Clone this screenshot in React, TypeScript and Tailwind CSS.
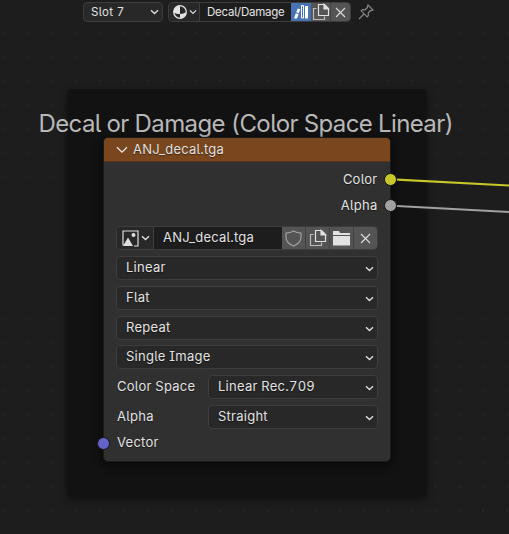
import React from 'react';

function Chevron({ className = '' }: { className?: string }) {
  return (
    <svg className={`shrink-0 ${className}`} width="9" height="6" viewBox="0 0 9 6" fill="none" stroke="#dedede" strokeWidth="1.4">
      <path d="M1 1.2 4.5 4.5 8 1.2" />
    </svg>
  );
}

function Duplicate() {
  return (
    <svg width="18" height="18" viewBox="0 0 18 18" fill="none" stroke="#e0e0e0" strokeWidth="1.2">
      <path d="M4.500 5.500h-3v11h11v-3" stroke="#bdbdbd" />
      <path d="M6.500 1.500h6l4 4v7h-10z" />
      <path d="M12 1.500v4.500h4.500z" fill="#e0e0e0" />
    </svg>
  );
}

function Cross() {
  return (
    <svg width="11" height="11" viewBox="0 0 11 11" fill="none" stroke="#d9d9d9" strokeWidth="1.2">
      <path d="m1 1 9 9M10 1 1 10" />
    </svg>
  );
}

function Select({ label, className = '' }: { label: string; className?: string }) {
  return (
    <div className={`flex h-6 items-center justify-between rounded-[4px] border border-[#3d3d3d] bg-[#282828] pl-[9px] pr-[3px] ${className}`}>
      <span>{label}</span>
      <Chevron className="mt-px" />
    </div>
  );
}

function Toolbar() {
  return (
    <div className="flex h-6 pl-[83px] pt-[2px] text-[11.5px]">
      <div className="flex h-5 w-20 items-center justify-between rounded-[4px] border border-[#3d3d3d] bg-[#282828] pl-[7px] pr-[3px]">
        <span className="pt-px tracking-[0.35px]">Slot 7</span>
        <Chevron />
      </div>
      <div className="ml-[5px] flex h-5 w-[183px] overflow-hidden rounded-[4px] border border-[#3d3d3d] bg-[#1d1d1d]">
        <div className="flex w-[31px] shrink-0 items-center justify-between border-r border-[#3d3d3d] bg-[#282828] pl-[4px] pr-[2px]">
          <svg width="14" height="14" viewBox="0 0 14 14">
            <circle cx="7" cy="7" r="6.3" fill="#282828" stroke="#e4e4e4" strokeWidth="1.3" />
            <path d="M7 7V.6A6.4 6.4 0 0 0 .8 7.8Q4 9.3 7 9z" fill="#e4e4e4" />
            <path d="M7 9q3.500 0 6.200-1.700A6.400 6.400 0 0 1 7 13.400z" fill="#e4e4e4" />
          </svg>
          <Chevron className="w-2" />
        </div>
        <div className="flex w-[91px] shrink-0 items-center pl-[7px] pt-px tracking-[-0.25px] whitespace-nowrap">Decal/Damage</div>
        <div className="flex w-5 shrink-0 items-center justify-center bg-[#4772b3]">
          <svg width="16" height="16" viewBox="0 0 16 16" fill="#fff">
            <path d="M1 14.500 2.800 9.200l2.800 1L4 14.500zM3.200 8.200 4.800 4.500l2.400.8-1.300 4z" />
            <path d="M8.500 1.500h2v12.500h-2z" fill="none" stroke="#fff" />
            <path d="M12 2h3v12.500h-3z" />
          </svg>
        </div>
        <div className="flex w-5 shrink-0 items-center justify-center border-r border-[#424242] bg-[#545454]"><Duplicate /></div>
        <div className="flex grow items-center justify-center bg-[#545454]"><Cross /></div>
      </div>
      <svg className="ml-[7px] mt-[2px]" width="16" height="16" viewBox="0 0 16 16" fill="none" stroke="#858585" strokeWidth="1.200">
        <path d="m10 1 5 5-1.500.6-1-.1-2.300 2.500.2 2.500-1.200 1.300-6-6L4.500 5.600 7 5.800l2.500-2.300-.2-1zM6 10l-5 5" />
      </svg>
    </div>
  );
}

function Socket({ className }: { className: string }) {
  return <i className={`absolute size-[13px] rounded-full border border-[#151515] ${className}`} />;
}

function ImageNode() {
  return (
    <section className="absolute left-[103px] top-[137px] h-[325px] w-[288px] rounded-[5px] border border-[#1b1b1b] bg-[#303030] text-[13px] tracking-[0.25px] shadow-[0_3px_9px_1px_rgba(0,0,0,0.6)] [text-shadow:0_1px_1px_rgba(0,0,0,0.5)]">
      <header className="flex h-6 items-center rounded-t-[4px] border-b border-[#5b3519] bg-[#79461d] pl-[12px]">
        <svg width="12" height="8" viewBox="0 0 12 8" fill="none" stroke="#e8e8e8" strokeWidth="1.300"><path d="m1 1.200 5 5 5-5" /></svg>
        <span className="ml-[5px] tracking-[0.2px]">ANJ_decal.tga</span>
      </header>
      <div className="flex flex-col pr-[12.5px] pt-[5px] text-right">
        <span className="h-[26px] leading-[25px]">Color</span>
        <span className="h-[26px] leading-[25px]">Alpha</span>
      </div>
      <div className="flex flex-col pl-[12px] pr-[12px] pt-[7px]">
        <div className="flex h-6 overflow-hidden rounded-[4px] border border-[#3d3d3d] bg-[#1d1d1d]">
          <div className="flex w-[37px] shrink-0 items-center justify-between border-r border-[#3d3d3d] bg-[#282828] pl-[5px] pr-[3px]">
            <svg width="17" height="17" viewBox="0 0 17 17">
              <path d="M1 15.500V1h15v15h-4" fill="none" stroke="#dedede" strokeWidth="1.200" />
              <path d="m1 16 5-8.500L11 16z" fill="#dedede" /><circle cx="11.500" cy="5" r="2" fill="#dedede" />
            </svg>
            <Chevron />
          </div>
          <div className="flex w-[128px] shrink-0 items-center pl-[9px] tracking-[0.2px]">ANJ_decal.tga</div>
          <div className="flex w-6 shrink-0 items-center justify-center border-r border-[#424242] bg-[#545454]">
            <svg width="17" height="17" viewBox="0 0 17 17" fill="none" stroke="#a1a1a1" strokeWidth="1.200">
              <path d="M8.500 1Q5.500 3 1 3.200V7q0 6 7.500 9Q16 13 16 7V3.200Q11.500 3 8.500 1z" />
            </svg>
          </div>
          <div className="flex w-6 shrink-0 items-center justify-center border-r border-[#424242] bg-[#545454]"><Duplicate /></div>
          <div className="flex w-6 shrink-0 items-center justify-center border-r border-[#424242] bg-[#545454]">
            <svg width="17" height="16" viewBox="0 0 17 16" fill="#e2e2e2"><path d="M0 1h6l1 2h10v2H0zM0 6h17v9.500H0z" /></svg>
          </div>
          <div className="flex grow items-center justify-center bg-[#545454]"><Cross /></div>
        </div>
        <Select label="Linear" className="mt-[6px]" />
        <Select label="Flat" className="mt-[6px]" />
        <Select label="Repeat" className="mt-[6px]" />
        <Select label="Single Image" className="mt-[5px]" />
        <div className="mt-[6px] flex items-center justify-between">
          <span className="pl-px">Color Space</span>
          <Select label="Linear Rec.709" className="w-[170px]" />
        </div>
        <div className="mt-[6px] flex items-center justify-between">
          <span className="pl-px">Alpha</span>
          <Select label="Straight" className="w-[170px]" />
        </div>
        <span className="mt-[2px] h-[22px] pl-px leading-[22px]">Vector</span>
      </div>
      <Socket className="left-[280px] top-[35px] bg-[#c7c729]" />
      <Socket className="left-[280px] top-[61px] bg-[#a1a1a1]" />
      <Socket className="left-[-7px] top-[299px] bg-[#6363c7]" />
    </section>
  );
}

export default function App() {
  return (
    <main className="relative h-[534px] w-[509px] overflow-hidden bg-[#1d1d1d] font-['Inter','Noto_Sans',sans-serif] text-[#e2e2e2] [font-feature-settings:'cv05','cv08','tnum']">
      <svg className="absolute inset-0" width="509" height="534">
        <defs>
          <pattern id="grid" x="4" y="8" width="23.900" height="23.900" patternUnits="userSpaceOnUse">
            <circle cx="1" cy="1" r="1" fill="#262626" />
          </pattern>
        </defs>
        <rect y="28" width="509" height="506" fill="url(#grid)" />
      </svg>
      <div className="absolute left-[67px] top-[89px] h-[408px] w-[360px] rounded-[5px] bg-[#121212] shadow-[0_3px_9px_rgba(0,0,0,0.45)]" />
      <svg className="absolute inset-0" width="509" height="534" fill="none" strokeWidth="2.200">
        <path d="M397 179.700 509 185.500" stroke="#c7c729" />
        <path d="M397 206 509 212" stroke="#a1a1a1" />
      </svg>
      <h1 className="absolute left-[38.5px] top-[109px] text-[24px] leading-[30px] tracking-[-0.62px] whitespace-nowrap text-[#b8b8b8]">Decal or Damage (Color Space Linear)</h1>
      <ImageNode />
      <div className="relative"><Toolbar /></div>
    </main>
  );
}
